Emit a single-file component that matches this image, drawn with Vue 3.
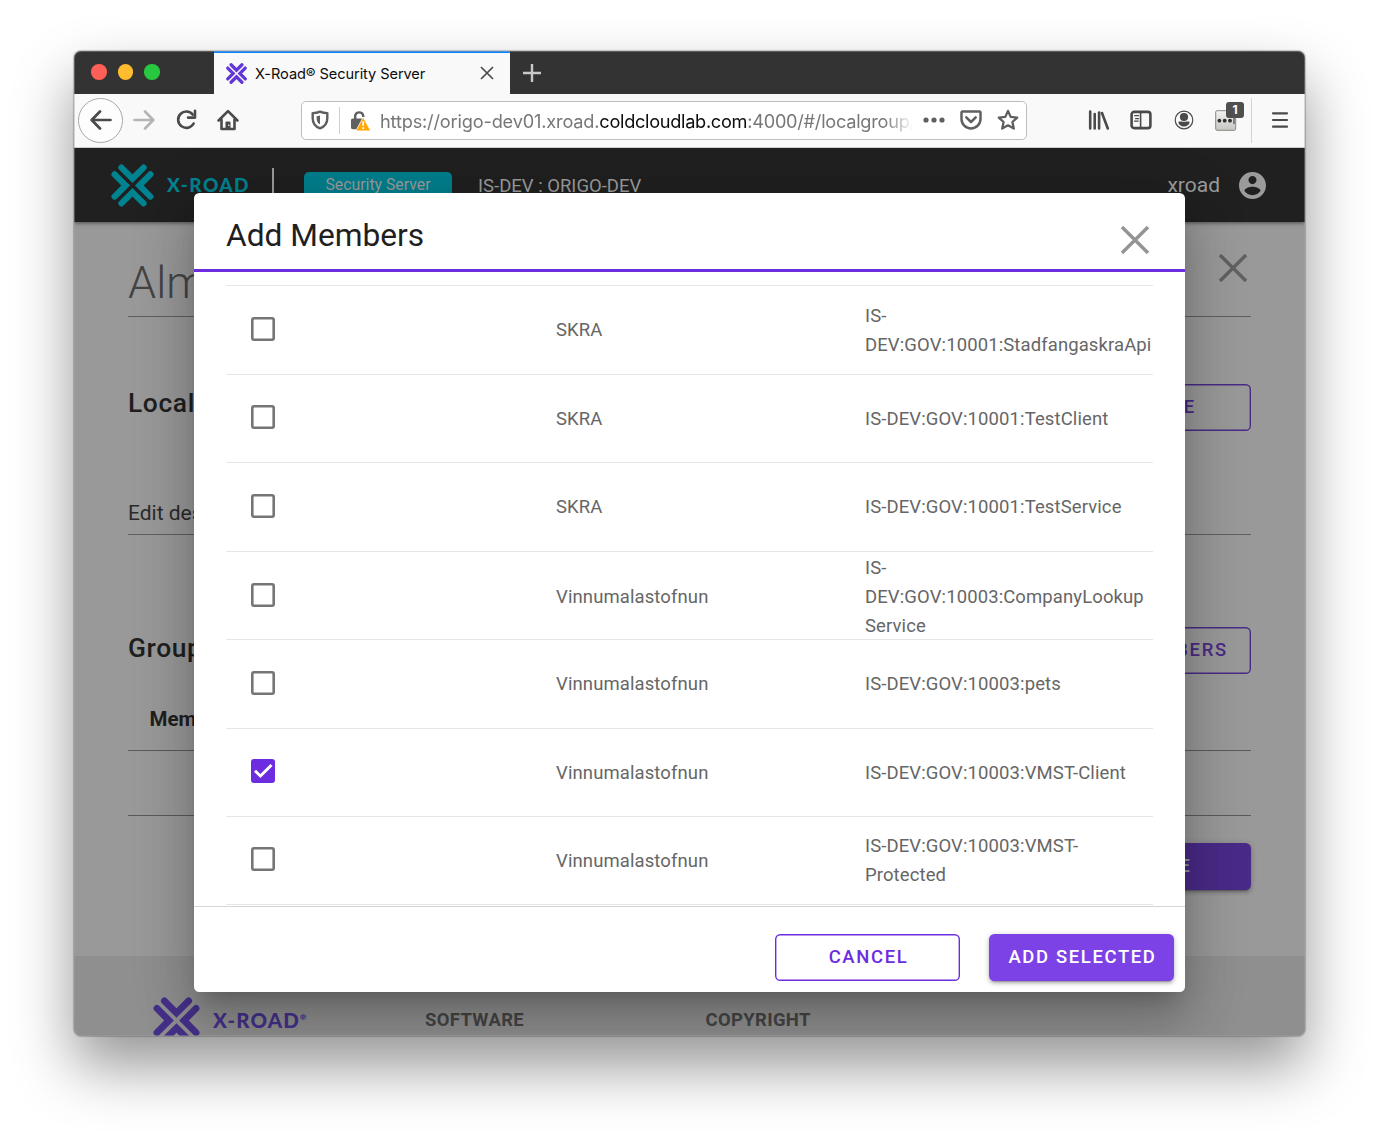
<script setup>
const rows = [
  { name: 'SKRA', id: 'IS-DEV:GOV:10001:StadfangaskraApi' },
  { name: 'SKRA', id: 'IS-DEV:GOV:10001:TestClient' },
  { name: 'SKRA', id: 'IS-DEV:GOV:10001:TestService' },
  { name: 'Vinnumalastofnun', id: 'IS-DEV:GOV:10003:CompanyLookup Service' },
  { name: 'Vinnumalastofnun', id: 'IS-DEV:GOV:10003:pets' },
  { name: 'Vinnumalastofnun', id: 'IS-DEV:GOV:10003:VMST-Client', checked: true },
  { name: 'Vinnumalastofnun', id: 'IS-DEV:GOV:10003:VMST-Protected' },
]
const mark = 'M10.4 3.6 21.5 14.7 32.6 3.6M3.6 10.4 14.7 21.5 3.6 32.6M39.4 10.4 28.3 21.5 39.4 32.6M10.4 39.4 21.5 28.3 32.6 39.4'
</script>

<template>
  <div class="desktop">
    <div class="window">
      <div class="tabbar">
        <div class="lights"><i class="red"></i><i class="yellow"></i><i class="green"></i></div>
        <div class="tab">
          <svg class="favicon" viewBox="0 0 43 43"><path :d="mark" /></svg>
          <span class="tab-title">X-Road® Security Server</span>
          <svg class="tab-close" viewBox="0 0 14 14"><path d="M1 1 13 13M13 1 1 13" /></svg>
        </div>
        <svg class="new-tab" viewBox="0 0 20 20"><path d="M10 1V19M1 10H19" /></svg>
      </div>

      <div class="toolbar">
        <div class="back">
          <svg viewBox="0 0 22 22"><path d="M20.5 11H2M10 2.5 1.7 11 10 19.5" /></svg>
        </div>
        <svg class="ico fwd" viewBox="0 0 22 22"><path d="M1.5 11H20M12 2.5 20.3 11 12 19.5" /></svg>
        <svg class="ico reload" viewBox="0 0 22 22">
          <path d="M17.8 5.6A8.2 8.2 0 1 0 18.6 14.5" /><path d="M20 1.8V8.6H13" />
        </svg>
        <svg class="ico home" viewBox="0 0 22 22">
          <path d="M1.6 11.5 11 2.2 20.4 11.5M4.5 10.5V20H17.5V10.5" /><path d="M8.5 20V13.5a1 1 0 0 1 1-1h3a1 1 0 0 1 1 1V20z" fill="#4a4a4a" stroke="none" />
          <circle cx="11.8" cy="16.3" r=".8" fill="#f9f9fa" stroke="none" />
        </svg>

        <div class="urlbar">
          <svg class="shield" viewBox="0 0 18 20">
            <path d="M9 1.6C6.8 2.6 4.2 3.1 1.7 3.1V8.2C1.7 13.2 4.3 16.6 9 18.3 13.7 16.6 16.3 13.2 16.3 8.2V3.1C13.8 3.1 11.2 2.6 9 1.6Z" />
            <path d="M9 5.4C8 5.8 6.8 6.1 5.6 6.2V8.4C5.6 11 6.8 13.2 9 14.3Z" fill="#5f5f5f" stroke="none" />
          </svg>
          <i class="url-sep"></i>
          <svg class="lock" viewBox="0 0 20 21">
            <path d="M5.2 9V5.6A4.1 4.1 0 0 1 13.2 5.6V7" fill="none" stroke="#5f5f5f" stroke-width="2.4" />
            <rect x="1" y="8.6" width="13" height="10.6" rx="1.6" fill="#5f5f5f" />
            <path d="M13.2 7.2 20 19.6a.9.9 0 0 1-.8 1.3H7.3a.9.9 0 0 1-.8-1.3Z" fill="#ffa800" stroke="#fff" stroke-width=".8" />
            <path d="M13.2 11.5V15.8M13.2 17.3V19.1" stroke="#fff" stroke-width="1.8" />
          </svg>
          <div class="url"><span class="u1">https://origo-dev01.xroad.</span><span class="u2">coldcloudlab.com</span><span class="u3">:4000/#/localgroup/</span></div>
          <svg class="dots" viewBox="0 0 22 6"><circle cx="3" cy="3" r="2.6" /><circle cx="11" cy="3" r="2.6" /><circle cx="19" cy="3" r="2.6" /></svg>
          <svg class="pocket" viewBox="0 0 22 20">
            <path d="M2.4 1.5H19.6a.9.9 0 0 1 .9.9V9A9.5 9.5 0 0 1 1.5 9V2.4a.9.9 0 0 1 .9-.9Z" /><path d="M6.3 7.4 11 12 15.7 7.4" />
          </svg>
          <svg class="star" viewBox="0 0 22 22">
            <path d="M11 1.9 13.7 7.9 20.2 8.6 15.4 13 16.8 19.6 11 16.3 5.2 19.6 6.6 13 1.8 8.6 8.3 7.9Z" />
          </svg>
        </div>

        <svg class="ico library" viewBox="0 0 22 22"><path d="M2.2 2.5V19.5M6.7 5V19.5M11.1 3.5V19.5M14 4 19.8 19.5" /></svg>
        <svg class="ico sidebar" viewBox="0 0 22 22">
          <rect x="1.6" y="2.9" width="18.8" height="16.2" rx="2.6" /><path d="M10.6 3V19" stroke-width="1.6" />
          <path d="M4.6 6.7H8.6M5.6 9.7H8.6M4.6 12.2H8.2" stroke-width="1.2" />
        </svg>
        <svg class="ico account" viewBox="0 0 22 22">
          <circle cx="11" cy="11" r="8.8" stroke-width="1.2" />
          <circle cx="11" cy="8" r="4.1" fill="#4a4a4a" stroke="none" />
          <path d="M5.4 12.9C7 12.2 8 12.8 11 12.8S15 12.2 16.6 12.9C16.4 15.8 13.7 17.4 11 17.4S5.6 15.8 5.4 12.9Z" fill="#4a4a4a" stroke="none" />
        </svg>
        <div class="ext">
          <svg viewBox="0 0 30 30">
            <defs><linearGradient id="g" x1="0" y1="0" x2="0" y2="1"><stop offset="0" stop-color="#f4f4f2" /><stop offset="1" stop-color="#c4c6c2" /></linearGradient></defs>
            <rect x=".7" y="8.7" width="20" height="19.6" rx="1.5" fill="url(#g)" stroke="#858884" />
            <path d="M19 15V22" stroke="#444" stroke-width="1.2" />
            <g fill="#2e2e2e"><circle cx="4.4" cy="18.7" r="1.9" /><circle cx="9.7" cy="18.7" r="1.9" /><circle cx="15" cy="18.7" r="1.9" /></g>
          </svg>
          <span class="badge">1</span>
        </div>
        <i class="tool-sep"></i>
        <svg class="ico menu" viewBox="0 0 22 22"><path d="M4 4.3H18M4 11H18M4 17.7H18" /></svg>
      </div>

      <div class="page">
        <header class="appbar">
          <svg class="mark" viewBox="0 0 43 43"><path :d="mark" /></svg>
          <span class="wordmark">X-ROAD</span>
          <i class="bar-sep"></i>
          <span class="tag">Security Server</span>
          <span class="instance">IS-DEV : ORIGO-DEV</span>
          <span class="user">xroad</span>
          <svg class="avatar" viewBox="2 2 20 20"><path d="M12 2C6.48 2 2 6.48 2 12s4.48 10 10 10 10-4.48 10-10S17.52 2 12 2zm0 3c1.66 0 3 1.34 3 3s-1.34 3-3 3-3-1.34-3-3 1.34-3 3-3zm0 14.2c-2.5 0-4.71-1.28-6-3.22.03-1.99 4-3.08 6-3.08 1.99 0 5.97 1.09 6 3.08-1.29 1.94-3.5 3.22-6 3.22z" /></svg>
        </header>

        <main class="content">
          <div class="title-row">
            <h1>Alm</h1>
            <svg class="x" viewBox="0 0 28 28"><path d="M1 1 27 27M27 1 1 27" /></svg>
          </div>
          <div class="section first"><h2>Local Group</h2><span class="btn outline">DELETE</span></div>
          <div class="field">Edit description</div>
          <div class="section second"><h2>Group Members</h2><span class="btn outline">ADD MEMBERS</span></div>
          <div class="thead">Member Name</div>
          <div class="trow"></div>
          <div class="actions"><span class="btn solid">CLOSE</span></div>
        </main>

        <footer class="foot">
          <svg class="mark" viewBox="0 0 43 43"><path :d="mark" /></svg>
          <span class="wordmark">X-ROAD<sup>®</sup></span>
          <span class="col software">SOFTWARE</span>
          <span class="col">COPYRIGHT</span>
        </footer>

        <div class="modal">
          <div class="modal-head">
            <span>Add Members</span>
            <svg class="x" viewBox="0 0 28 28"><path d="M1 1 27 27M27 1 1 27" /></svg>
          </div>
          <div class="modal-body">
            <div v-for="r in rows" :key="r.id" class="row">
              <div class="cell">
                <span class="check" :class="{ on: r.checked }">
                  <svg v-if="r.checked" viewBox="0 0 24 24"><path d="M4 11.8 9.4 17 20.5 6" /></svg>
                </span>
              </div>
              <div class="cell">{{ r.name }}</div>
              <div class="cell">{{ r.id }}</div>
            </div>
          </div>
          <div class="modal-foot">
            <span class="btn outline">CANCEL</span>
            <span class="btn solid">ADD SELECTED</span>
          </div>
        </div>
      </div>
    </div>
  </div>
</template>

<style>
body { background: #fff; }
</style>

<style scoped>
* { box-sizing: border-box; }
svg { display: block; flex: none; fill: none; }
.desktop {
  width: 1379px; height: 1134px; padding: 51px 74px 98px; overflow: hidden;
  font-family: Roboto, sans-serif;
}
.window {
  position: relative; display: flex; flex-direction: column; width: 1231px; height: 985px;
  border-radius: 7px; overflow: hidden;
  box-shadow: 0 0 1px 1px rgba(0, 0, 0, .2), 0 30px 60px rgba(0, 0, 0, .42);
}
.window::after {
  content: ''; position: absolute; inset: 0; border: 1px solid rgba(160, 160, 160, .4); border-radius: 7px;
}

.tabbar { display: flex; height: 43px; flex: none; background: #333; }
.lights { display: flex; gap: 11px; width: 140px; padding: 13px 0 0 17px; }
.lights i { width: 15.5px; height: 15.5px; border-radius: 50%; }
.red { background: #ff5f57; }
.yellow { background: #febc2e; }
.green { background: #28c840; }
.tab {
  display: flex; align-items: center; width: 296px; padding: 0 16px 1px 12px;
  background: #f9f9fa; border-top: 2px solid #0a84ff;
}
.favicon { width: 21px; height: 21px; }
.favicon path { stroke: #6236d8; stroke-width: 6.6; stroke-linecap: round; }
.tab-title { margin-left: 8px; padding-top: 2px; font: 14.6px Inter, sans-serif; color: #0c0c0d; letter-spacing: -.09px; white-space: nowrap; }
.tab-close { width: 14px; height: 14px; margin-left: auto; stroke: #4a4a4a; stroke-width: 1.7; }
.new-tab { width: 20px; height: 20px; margin: 11.5px 0 0 12px; stroke: #c8c8c8; stroke-width: 2.4; }

.toolbar { display: flex; align-items: center; height: 54px; flex: none; padding: 0 0 1px 4px; background: #f9f9fa; border-bottom: 1px solid #ccc; }
.ico { width: 22px; height: 22px; stroke: #4a4a4a; stroke-width: 2.6; stroke-linecap: round; stroke-linejoin: round; }
.back { display: flex; align-items: center; justify-content: center; width: 45px; height: 45px; border: 1.3px solid #a9a9a9; border-radius: 50%; background: #fdfdfd; }
.back svg { width: 22px; height: 22px; stroke: #4a4a4a; stroke-width: 2.7; stroke-linecap: round; stroke-linejoin: round; }
.fwd { margin-left: 10px; stroke: #b4b4b4; }
.reload { margin-left: 20px; }
.home { margin-left: 20px; }
.urlbar { display: flex; align-items: center; width: 726px; height: 39px; margin-left: 62px; padding-left: 9px; border: 1.3px solid #bdbdbd; border-radius: 5px; background: #fff; }
.shield { width: 18px; height: 20px; stroke: #5f5f5f; stroke-width: 2.4; stroke-linejoin: round; }
.url-sep { width: 1px; height: 27px; margin-left: 10px; background: #d0d0d0; }
.lock { width: 20px; height: 21px; margin-left: 10px; }
.url {
  width: 532px; margin-left: 10px; padding-top: 2px; overflow: hidden; white-space: nowrap; font: 18.2px/26px Inter, sans-serif; color: #777;
  -webkit-mask-image: linear-gradient(90deg, #000 505px, transparent 533px);
  mask-image: linear-gradient(90deg, #000 505px, transparent 533px);
}
.url span { display: inline-block; }
.u1 { letter-spacing: -.18px; }
.u2 { color: #0c0c0d; letter-spacing: -.3px; }
.u3 { letter-spacing: -.26px; }
.dots { width: 22px; height: 6px; margin-left: 10.5px; fill: #5f5f5f; }
.pocket { width: 22px; height: 20px; margin-left: 15px; stroke: #5f5f5f; stroke-width: 2.5; stroke-linecap: round; stroke-linejoin: round; }
.star { width: 22px; height: 22px; margin-left: 15px; stroke: #5f5f5f; stroke-width: 2.3; stroke-linejoin: round; }
.library { margin-left: 61px; }
.sidebar { margin-left: 20px; }
.account { margin-left: 20.5px; }
.ext { position: relative; width: 30px; height: 38px; margin-left: 20.5px; }
.ext svg { width: 30px; height: 30px; margin-top: 1px; }
.badge { position: absolute; left: 11px; top: 1px; width: 18px; height: 16px; border-radius: 3px; background: #4f4f4f; color: #fff; font: 700 12px/16px Inter, sans-serif; text-align: center; }
.tool-sep { width: 1px; height: 45px; margin-left: 6px; background: #d4d4d4; }
.menu { margin-left: 17px; stroke-width: 2.2; }

.page { position: relative; display: flex; flex-direction: column; flex: 1; overflow: hidden; background: #999; }
.appbar { position: relative; display: flex; align-items: center; height: 74px; flex: none; padding: 0 39.5px 0 37px; background: #202020; color: #9b9b9b; box-shadow: 0 1px 4px rgba(0, 0, 0, .5); }
.mark { width: 43px; height: 43px; stroke-width: 6.2; stroke-linecap: round; stroke: #008391; }
.wordmark { margin-left: 13px; width: 82px; font: 900 19px/24px Lato, sans-serif; letter-spacing: 1.4px; color: #008391; white-space: nowrap; }
.bar-sep { width: 2px; height: 34px; margin-left: 23px; background: #9b9b9b; }
.tag { width: 148px; height: 26px; margin-left: 30px; border-radius: 5px; background: #007e8c; font-size: 15.8px; line-height: 26px; text-align: center; }
.instance { margin-left: 26px; font-size: 18.5px; line-height: 22px; padding-top: 1px; }
.user { margin-left: auto; font-size: 21px; }
.avatar { width: 27px; height: 27px; margin-left: 18.5px; fill: #9b9b9b; }

.content { flex: none; height: 734px; padding: 0 54px; color: #1f1f1f; }
.title-row { display: flex; justify-content: space-between; height: 95px; border-bottom: 1px solid #5f5f5f; }
h1 { margin: 35px 0 0; font-size: 45px; font-weight: 300; line-height: 52px; color: #444; }
.title-row .x { width: 28px; height: 28px; margin: 31.5px 4.5px 0 0; stroke: #616161; stroke-width: 3.4; }
.section { display: flex; justify-content: space-between; height: 47px; }
.first { margin-top: 67px; }
h2 { margin: 3px 0 0; font-size: 26.4px; line-height: 33px; font-weight: 500; letter-spacing: .6px; }
.field { height: 104px; padding-top: 69px; border-bottom: 1px solid #5f5f5f; font-size: 21px; line-height: 26px; color: #2b2b2b; }
.second { margin-top: 92px; }
.second h2 { margin-top: 5px; }
.thead { height: 77px; padding: 32px 0 0 21.5px; border-bottom: 1px solid #5a5a5a; font-size: 20.5px; line-height: 26px; font-weight: 700; }
.trow { height: 65px; border-bottom: 1px solid #5a5a5a; }
.actions { display: flex; justify-content: flex-end; margin-top: 26.5px; }

.btn { display: flex; align-items: center; justify-content: center; width: 185px; height: 47.5px; padding-bottom: 1px; border-radius: 5.3px; font-size: 18.46px; font-weight: 500; letter-spacing: 1.65px; white-space: nowrap; }
.outline { box-shadow: inset 0 0 0 1.4px currentColor; color: #6c2ce0; }
.modal .btn { padding-left: 2px; }
.section .btn { margin-top: -.5px; padding-bottom: 0; }
.content .outline { color: #4a2a85; }
.solid { background: #7c42e6; color: #fff; box-shadow: 0 4px 1px -3px rgba(0, 0, 0, .2), 0 3px 3px rgba(0, 0, 0, .14), 0 1px 6px rgba(0, 0, 0, .2); }
.content .solid { background: #4a2a88; color: #999; padding-left: 2px; }
.content .second .btn { width: 193px; }

.foot { display: flex; flex: 1; background: #8f8f8f; padding-left: 79px; }
.foot .mark { width: 47px; height: 47px; margin-top: 41px; stroke: #45308a; }
.foot .wordmark { width: 92px; margin: 52px 0 0 13px; font-size: 20.5px; letter-spacing: 1.1px; color: #45308a; }
.foot sup { font-size: 8px; line-height: 0; letter-spacing: 0; vertical-align: 8px; }
.col { width: 280.5px; margin: 53.4px 0 0; font-size: 18.46px; line-height: 22px; font-weight: 700; letter-spacing: .35px; color: #454545; }
.software { margin-left: 120px; }

.modal {
  position: absolute; left: 120px; top: 44.5px; width: 991px; height: 799.5px; display: flex; flex-direction: column;
  border-radius: 5.3px; overflow: hidden; background: #fff;
  box-shadow: 0 14px 20px -9px rgba(0, 0, 0, .2), 0 32px 50px 4px rgba(0, 0, 0, .14), 0 12px 60px 10px rgba(0, 0, 0, .12);
}
.modal-head { display: flex; justify-content: space-between; height: 79.5px; flex: none; padding: 22px 36px 0 32px; border-bottom: 3px solid #6c2ce0; font-size: 31.7px; line-height: 42px; color: #1f1f1f; }
.modal-head .x { width: 28px; height: 28px; margin-top: 11px; stroke: #949494; stroke-width: 3.4; }
.modal-body { flex: none; height: 634px; padding: 13px 32px 0; overflow: hidden; }
.row { display: grid; grid-template-columns: repeat(3, minmax(0, 1fr)); align-items: center; height: 88.5px; border-top: 1px solid #e6e6e6; }
.row:last-child { border-bottom: 1px solid #e6e6e6; }
.cell { padding: 2.4px 21px 0; font-size: 18.48px; line-height: 29.1px; letter-spacing: .12px; color: #666; }
.cell:first-child { padding: 0 0 0 25px; }
.check { display: block; width: 24px; height: 24px; margin-top: -2.5px; box-shadow: inset 0 0 0 2.6px #757575; border-radius: 3px; }
.check.on { box-shadow: none; background: #6c2ce0; }
.check path { stroke: #fff; stroke-width: 2.9; }
.modal-foot { display: flex; justify-content: flex-end; flex: 1; gap: 29px; padding: 26.5px 11px 0 0; border-top: 1.4px solid #d6d6d6; }
</style>
